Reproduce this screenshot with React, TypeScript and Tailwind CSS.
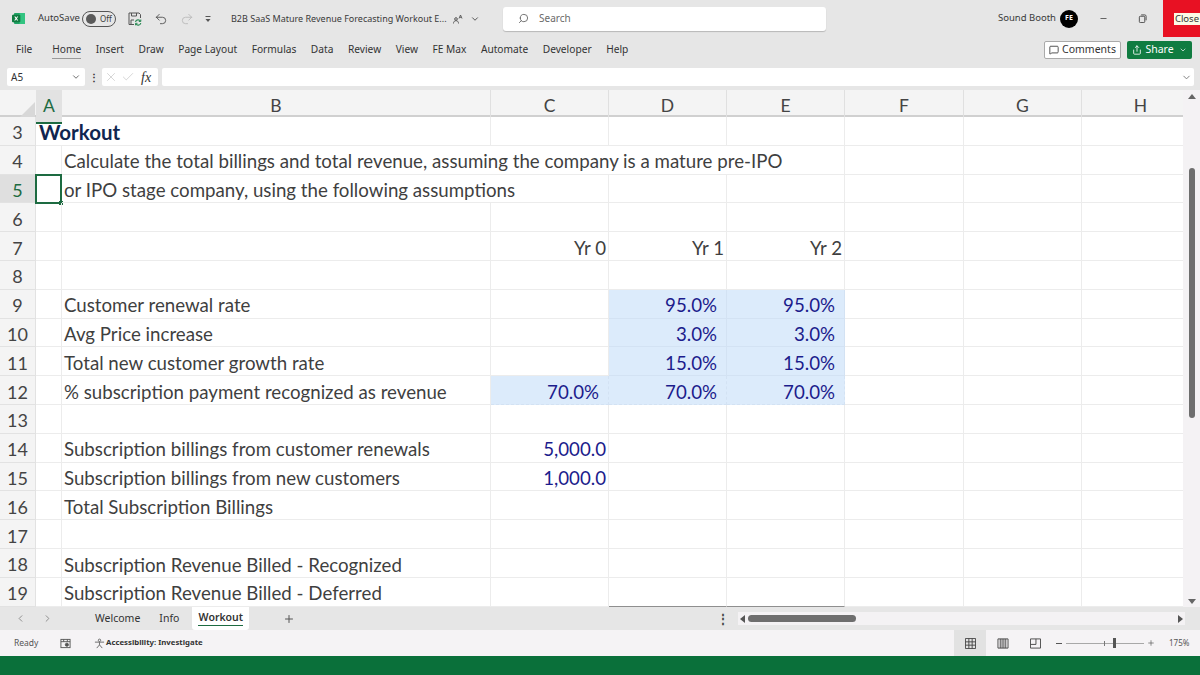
import { Check, ChevronDown, ChevronLeft, ChevronRight, MessageSquare, Minus, Plus, Redo2, Search, Share, Undo2, X } from "lucide-react";

const gridCols = "grid grid-cols-[36px_26px_429px_118px_118px_118px_119px_118px_118px]";
const colNames = ["A", "B", "C", "D", "E", "F", "G", "H"];

type CellData = { text?: string; right?: boolean; input?: boolean; blue?: boolean; pr?: string; open?: boolean; bold?: boolean };
type RowData = { n: number; cells: Record<number, CellData> };

const pct = (text: string): CellData => ({ text, right: true, input: true, blue: true, pr: "pr-[9px]" });

const rows: RowData[] = [
  { n: 3, cells: { 0: { text: "Workout", bold: true, open: true } } },
  { n: 4, cells: { 1: { text: "Calculate the total billings and total revenue, assuming the company is a mature pre-IPO", open: true }, 2: { open: true }, 3: { open: true } } },
  { n: 5, cells: { 1: { text: "or IPO stage company, using the following assumptions", open: true } } },
  { n: 6, cells: {} },
  {
    n: 7,
    cells: {
      2: { text: "Yr 0", right: true, pr: "pr-[2px]" },
      3: { text: "Yr 1", right: true, pr: "pr-[2px]" },
      4: { text: "Yr 2", right: true, pr: "pr-[2px]" },
    },
  },
  { n: 8, cells: {} },
  { n: 9, cells: { 1: { text: "Customer renewal rate" }, 3: pct("95.0%"), 4: pct("95.0%") } },
  { n: 10, cells: { 1: { text: "Avg Price increase" }, 3: pct("3.0%"), 4: pct("3.0%") } },
  { n: 11, cells: { 1: { text: "Total new customer growth rate" }, 3: pct("15.0%"), 4: pct("15.0%") } },
  { n: 12, cells: { 1: { text: "% subscription payment recognized as revenue" }, 2: pct("70.0%"), 3: pct("70.0%"), 4: pct("70.0%") } },
  { n: 13, cells: {} },
  { n: 14, cells: { 1: { text: "Subscription billings from customer renewals" }, 2: { text: "5,000.0", right: true, blue: true, pr: "pr-[2px]" } } },
  { n: 15, cells: { 1: { text: "Subscription billings from new customers" }, 2: { text: "1,000.0", right: true, blue: true, pr: "pr-[2px]" } } },
  { n: 16, cells: { 1: { text: "Total Subscription Billings" } } },
  { n: 17, cells: {} },
  { n: 18, cells: { 1: { text: "Subscription Revenue Billed - Recognized" } } },
  { n: 19, cells: { 1: { text: "Subscription Revenue Billed - Deferred" } } },
];

function Cell({ cell, bottomLine, dashed }: { cell?: CellData; bottomLine?: boolean; dashed?: boolean }) {
  const c = cell ?? {};
  return (
    <div
      className={[
        "flex h-full min-w-0 items-center whitespace-nowrap border-b leading-none",
        c.bold ? "pt-[2px]" : "pt-[4px]",
        bottomLine ? "border-b-[#8f8f8f]" : c.input ? "border-b-[#d3e2f3]" : "border-b-[#ececec]",
        dashed ? "border-dashed border-b-[#b9cde3]" : "",
        c.open ? "border-r-0" : c.input ? "border-r border-r-[#d3e2f3]" : "border-r border-r-[#ececec]",
        c.input ? "bg-[#dcebfb]" : "",
        c.right ? "justify-end" : "justify-start",
        c.pr ?? "",
        c.blue ? "text-[#1c1c8c]" : "text-[#3f3f3f]",
        c.bold ? "pl-[3px] text-[20.5px] font-bold text-[#10254f]" : "",
        !c.right && !c.bold ? "pl-[2px]" : "",
      ].join(" ")}
    >
      {c.text}
    </div>
  );
}

function SheetRow({ row }: { row: RowData }) {
  const current = row.n === 5;
  return (
    <div className={`${gridCols} h-[28.8px]`}>
      <div
        className={`flex items-center justify-center border-r border-b border-[#e2e2e2] pt-[3px] text-[18px] leading-none ${
          current ? "bg-[#dfdfdf] text-[#1c6b41]" : "bg-[#f4f4f4] text-[#444]"
        }`}
      >
        {row.n}
      </div>
      {colNames.map((_, i) => (
        <div key={i} className="relative h-full min-w-0">
          <Cell cell={row.cells[i]} bottomLine={row.n === 19 && (i === 3 || i === 4)} dashed={row.n === 12 && !!row.cells[i]?.input} />
          {current && i === 0 && (
            <div className="absolute -top-px -left-px h-[30px] w-[27px] border-2 border-[#1d6b41]">
              <div className="absolute -right-[3px] -bottom-[3px] h-[4px] w-[4px] bg-[#1d6b41]" />
            </div>
          )}
        </div>
      ))}
    </div>
  );
}

function ExcelLogo() {
  return (
    <svg viewBox="0 0 14 14" className="h-[13px] w-[13px]">
      <rect x="2" y="1" width="12" height="12" rx="1.5" fill="#21a366" />
      <rect x="8" y="1" width="6" height="12" fill="#33c481" rx="1" />
      <rect x="0" y="3" width="9" height="8" rx="1" fill="#107c41" />
      <path d="M2.4 4.8h1.3l.9 1.4.9-1.4h1.2L5.3 7l1.4 2.2H5.4l-.9-1.4-.9 1.4H2.4L3.8 7z" fill="#fff" />
    </svg>
  );
}

function SaveIcon() {
  return (
    <svg viewBox="0 0 14 14" className="ml-[12px] h-[14px] w-[14px] fill-none">
      <path d="M6 12.500H1V1h10l1.500 1.500V6" stroke="#555" strokeWidth="1" />
      <path d="M3.500 1v3h5V1M3 12.500V8h3" stroke="#555" strokeWidth="1" />
      <path d="M7.500 10a2.700 2.700 0 0 1 5-.8M12.800 11a2.700 2.700 0 0 1-5 .8" stroke="#2e8b57" strokeWidth="1.200" />
      <path d="M12.800 7.500v2h-2M7.500 13.300v-2h2" stroke="#2e8b57" strokeWidth="1" />
    </svg>
  );
}

function TitleBar() {
  return (
    <div className="flex h-[37px] items-center pl-[12px] text-[9.5px] text-[#3a3a3a]">
      <ExcelLogo />
      <span className="ml-[13px] w-[44px]">AutoSave</span>
      <div className="flex h-[16px] w-[34px] items-center rounded-full border border-[#555] pl-[3px]">
        <span className="h-[10px] w-[10px] rounded-full bg-[#5a5a5a]" />
        <span className="ml-[4px] text-[8px]">Off</span>
      </div>
      <SaveIcon />
      <Undo2 className="ml-[12px] h-[14px] w-[14px] text-[#444]" strokeWidth={1.4} />
      <Redo2 className="ml-[12px] h-[14px] w-[14px] text-[#b5b5b5]" strokeWidth={1.4} />
      <svg viewBox="0 0 8 8" className="ml-[10px] h-[8px] w-[8px] text-[#555]">
        <path d="M1.500 1.500h5" stroke="currentColor" />
        <path d="M1.500 4h5L4 7z" fill="currentColor" />
      </svg>
      <span className="ml-[19px] w-[222px] text-[9px] whitespace-nowrap">B2B SaaS Mature Revenue Forecasting Workout E...</span>
      <svg viewBox="0 0 10 10" className="h-[10px] w-[10px] fill-none stroke-[#555]">
        <circle cx="3" cy="5" r="1.300" />
        <path d="M.5 9.500c0-2 1-2.800 2.500-2.800s2.500.8 2.500 2.800M6 4.500l1.500-3.500L9 4.500M6.700 3.300h1.600" strokeWidth="0.900" />
      </svg>
      <ChevronDown className="ml-[7px] h-[10px] w-[10px]" />
      <div className="ml-[23px] flex h-[24px] w-[323px] items-center rounded-[3px] bg-white pl-[15px] text-[10px] text-[#6a6a6a] shadow-[0_1px_1px_rgba(0,0,0,0.2)]">
        <Search className="h-[11px] w-[11px] -scale-x-100" />
        <span className="ml-[10px]">Search</span>
      </div>
      <span className="ml-[172px] w-[55px] whitespace-nowrap">Sound Booth</span>
      <span className="ml-[7px] flex h-[18px] w-[18px] items-center justify-center rounded-full bg-black text-[7px] font-bold text-white">FE</span>
      <Minus className="ml-[21px] h-[9px] w-[9px]" />
      <svg viewBox="0 0 10 10" className="ml-[30px] h-[9px] w-[9px] fill-none stroke-[#444]">
        <rect x="1.500" y="2.500" width="6" height="7" rx="1" />
        <path d="M3.500 1h4a1.500 1.500 0 0 1 1.500 1.500V7" />
      </svg>
      <div className="ml-auto flex h-full w-[37px] items-center justify-end bg-[#e81123]">
        <span className="bg-[#fbfbe6] px-[1px] text-[9.5px] leading-[12px] text-[#333]">Close</span>
      </div>
    </div>
  );
}

const tabs = ["Home", "Insert", "Draw", "Page Layout", "Formulas", "Data", "Review", "View", "FE Max", "Automate", "Developer", "Help"];

function RibbonTabs() {
  return (
    <div className="flex h-[25px] items-center pl-[16px] text-[10.2px] text-[#333]">
      <span className="mr-[20px]">File</span>
      <div className="flex gap-[14.5px]">
        {tabs.map((t) => (
          <span key={t} className={t === "Home" ? "relative" : ""}>
            {t}
            {t === "Home" && <span className="absolute right-0 -bottom-[2px] left-0 h-px bg-[#999]" />}
          </span>
        ))}
      </div>
      <div className="ml-auto flex items-center pr-[8px] text-[10.5px]">
        <div className="flex h-[18px] w-[77px] items-center justify-center rounded-[2px] border border-[#aaa] bg-white">
          <MessageSquare className="mr-[3px] h-[10px] w-[10px]" />
          Comments
        </div>
        <div className="ml-[6px] flex h-[18px] w-[65px] items-center justify-center rounded-[2px] bg-[#107c41] text-white">
          <Share className="mr-[3px] h-[10px] w-[10px]" />
          Share
          <ChevronDown className="ml-[5px] h-[8px] w-[8px]" />
        </div>
      </div>
    </div>
  );
}

function FormulaBar() {
  return (
    <div className="flex h-[28px] items-start pt-[6px] pl-[7px] text-[10px] text-[#333]">
      <div className="flex h-[18px] w-[78px] items-center justify-between rounded-[2px] bg-white px-[4px]">
        A5
        <ChevronDown className="h-[10px] w-[10px] text-[#555]" />
      </div>
      <span className="flex h-[18px] w-[17px] items-center justify-center font-bold">⋮</span>
      <div className="flex h-[18px] w-[56px] items-center rounded-[2px] bg-white pl-[2px]">
        <X className="h-[14px] w-[14px] text-[#c4c4c4]" strokeWidth={1.2} />
        <Check className="ml-[3px] h-[14px] w-[14px] text-[#c4c4c4]" strokeWidth={1.2} />
        <span className="ml-[6px] font-['Liberation_Serif',serif] text-[14px] italic text-[#333]">fx</span>
      </div>
      <div className="ml-[4px] flex h-[18px] w-[1032px] items-center justify-end rounded-[2px] bg-white pr-[2px]">
        <ChevronDown className="h-[11px] w-[11px] text-[#777]" />
      </div>
    </div>
  );
}

function ColumnHeader() {
  return (
    <div className={`${gridCols} h-[27px] border-b-2 border-[#d0d0d0] bg-[#f4f4f4] text-[17.5px] leading-[32px] text-[#444]`}>
      <div className="flex items-end justify-end pr-[1px] pb-[1px]">
        <span className="h-0 w-0 border-b-[19px] border-l-[19px] border-b-[#d8d8d8] border-l-transparent" />
      </div>
      {colNames.map((c, i) => (
        <div
          key={c}
          className={`text-center ${i === 0 ? "-mb-[2px] border-b-2 border-[#1d6b41] bg-[#e2e2e2] text-[#1d6b41]" : "border-r border-[#e0e0e0]"}`}
        >
          {c}
        </div>
      ))}
    </div>
  );
}

function VerticalScroll() {
  return (
    <div className="flex w-[17px] flex-col items-center bg-[#f4f2f4] pt-[4px]">
      <span className="h-0 w-0 border-x-[4px] border-b-[5px] border-x-transparent border-b-[#666]" />
      <div className="mt-[69px] ml-[1px] h-[250px] w-[6px] rounded-full bg-[#6e6e6e]" />
      <span className="mt-auto mb-[3px] h-0 w-0 border-x-[4px] border-t-[5px] border-x-transparent border-t-[#666]" />
    </div>
  );
}

function SheetTabs() {
  return (
    <div className="flex h-[23px] items-center bg-[#e6e6e6] text-[10.5px] text-[#333]">
      <ChevronLeft className="ml-[15px] h-[11px] w-[11px] text-[#888]" />
      <ChevronRight className="ml-[16px] h-[11px] w-[11px] text-[#888]" />
      <span className="ml-[42px]">Welcome</span>
      <span className="ml-[19px]">Info</span>
      <div className="relative ml-[13px] flex h-[23px] w-[57px] items-start justify-center rounded-b-[3px] bg-white pt-[3px] font-semibold">
        Workout
        <span className="absolute right-[6px] bottom-[4px] left-[6px] h-[1.5px] bg-[#1d6b41]" />
      </div>
      <Plus className="ml-[34px] h-[12px] w-[12px] text-[#555]" />
      <span className="ml-[422px] w-[5px] text-[12px] font-bold text-[#444]">⋮</span>
      <div className="ml-[16px] flex h-[13px] w-[447px] items-center bg-[#f4f2f4]">
        <span className="ml-[2px] h-0 w-0 border-y-[4px] border-r-[5px] border-y-transparent border-r-[#555]" />
        <span className="ml-[3px] h-[7px] w-[108px] rounded-full bg-[#6e6e6e]" />
        <span className="mr-[2px] ml-auto h-0 w-0 border-y-[4px] border-l-[5px] border-y-transparent border-l-[#555]" />
      </div>
    </div>
  );
}

function StatusBar() {
  return (
    <div className="flex h-[26px] items-center bg-[#f5f3f5] pl-[14px] text-[8.5px] text-[#555]">
      <span className="w-[46px]">Ready</span>
      <svg viewBox="0 0 12 12" className="h-[11px] w-[11px] fill-none stroke-[#555]">
        <rect x="1" y="1.500" width="10" height="9" />
        <path d="M1 4h10M4 1.500V4M8 1.500V4" />
        <circle cx="7.500" cy="7.300" r="1.700" fill="#555" />
      </svg>
      <svg viewBox="0 0 12 12" className="ml-[23px] h-[11px] w-[11px] fill-none stroke-[#666]">
        <circle cx="6" cy="2.500" r="1.300" />
        <path d="M1 4.500h10M6 4.500v3M6 7.500l-3 3.500M6 7.500l3 3.500" />
      </svg>
      <span className="ml-[1px] w-[98px] text-[7.8px] font-bold whitespace-nowrap text-[#333]">Accessibility: Investigate</span>
      <div className="ml-[750px] flex h-full w-[32px] items-center justify-center bg-[#e2e2e2]">
        <svg viewBox="0 0 12 12" className="h-[11px] w-[11px] fill-none stroke-[#444]">
          <path d="M.5.500h11v11H.5zM4.200.500v11M7.800.500v11M.5 4.200h11M.5 7.800h11" />
        </svg>
      </div>
      <svg viewBox="0 0 12 12" className="ml-[11px] h-[11px] w-[12px] fill-none stroke-[#444]">
        <path d="M.5 1h11v10H.5zM3 1v10M5 1v10M7 1v10M9 1v10" />
      </svg>
      <svg viewBox="0 0 12 12" className="ml-[21px] h-[11px] w-[11px] fill-none stroke-[#444]">
        <path d="M.5 1h11v10H.5zM.5 7h6M6.500 1v6" />
      </svg>
      <span className="ml-[15px] h-px w-[6px] bg-[#555]" />
      <div className="relative ml-[4px] h-px w-[78px] bg-[#a8a8a8]">
        <span className="absolute top-[-5px] left-[47px] h-[10px] w-[3px] bg-[#555]" />
        <span className="absolute top-[-2px] left-[38px] h-[5px] w-px bg-[#777]" />
      </div>
      <Plus className="ml-[3px] h-[8px] w-[8px] text-[#555]" />
      <span className="ml-[14px] text-[8px]">175%</span>
    </div>
  );
}

export default function App() {
  return (
    <div className="flex h-[675px] w-[1200px] flex-col overflow-hidden bg-[#e6e6e6] font-['Noto_Sans',sans-serif]">
      <TitleBar />
      <RibbonTabs />
      <FormulaBar />
      <div className="flex h-[517px] bg-white">
        <div className="w-[1183px] overflow-hidden font-['Lato',sans-serif] text-[18.7px]">
          <ColumnHeader />
          {rows.map((r) => (
            <SheetRow key={r.n} row={r} />
          ))}
        </div>
        <VerticalScroll />
      </div>
      <SheetTabs />
      <StatusBar />
      <div className="flex-1 bg-[#0a703a]" />
    </div>
  );
}
